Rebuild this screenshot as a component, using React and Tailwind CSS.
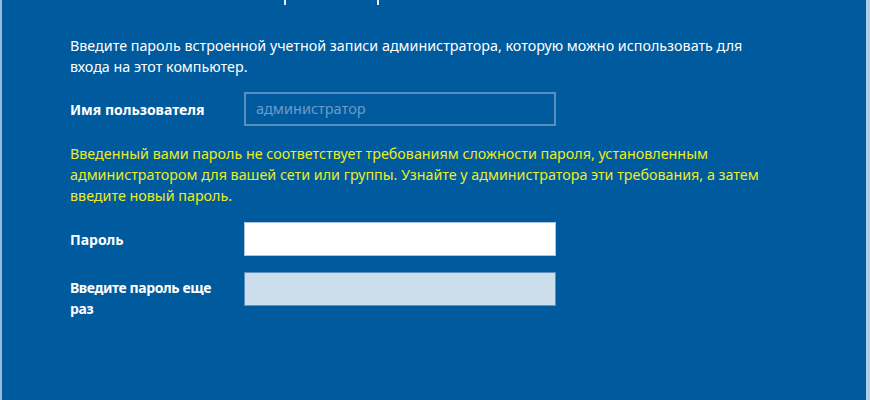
import React from 'react';

const font = { fontFamily: '"Noto Sans", "Open Sans", sans-serif' };

const App = () => {
    return (
        <div
            className="w-[870px] h-[400px] overflow-hidden bg-[#005a9e] border-l-2 border-l-[#9dbad6] border-r-4 border-r-[#b3cde3] text-white"
            style={font}
        >
            {/* Bits of the title line that is scrolled off */}
            <div className="flex h-[5px]">
                <span className="ml-[282px] w-[2px] h-full bg-[#e6eef6]" />
                <span className="ml-[91px] w-[2px] h-full bg-[#e6eef6]" />
            </div>

            <div className="pl-[68px] pt-[30px]">
                <p className="w-[700px] text-[14.3px] leading-[21px]">
                    Введите пароль встроенной учетной записи администратора, которую можно использовать для
                    входа на этот компьютер.
                </p>

                <div className="flex items-center mt-[15px]">
                    <label className="w-[174px] text-[14px] font-bold">Имя пользователя</label>
                    <div className="w-[312px] h-[34px] border-2 border-[#5b8fc2] flex items-center px-[10px] text-[14.5px] text-[#6e9bc9]">
                        администратор
                    </div>
                </div>

                <p className="w-[720px] mt-[17px] text-[14.3px] leading-[21px] text-[#ecec24]">
                    Введенный вами пароль не соответствует требованиям сложности пароля, установленным
                    администратором для вашей сети или группы. Узнайте у администратора эти требования, а затем
                    введите новый пароль.
                </p>

                <div className="flex items-center mt-[16px]">
                    <label className="w-[174px] text-[14px] font-bold">Пароль</label>
                    <input
                        type="password"
                        className="w-[312px] h-[34px] bg-white border border-[#a9c5e0] outline-none"
                    />
                </div>

                <div className="flex items-start mt-[16px]">
                    <label className="w-[174px] pt-[5px] pr-[22px] text-[14px] leading-[21px] font-bold tracking-[-0.4px]">
                        Введите пароль еще раз
                    </label>
                    <input
                        type="password"
                        className="w-[312px] h-[34px] bg-[#ccdeec] border border-[#5f8fbd] outline-none"
                    />
                </div>
            </div>
        </div>
    );
};

export default App;
